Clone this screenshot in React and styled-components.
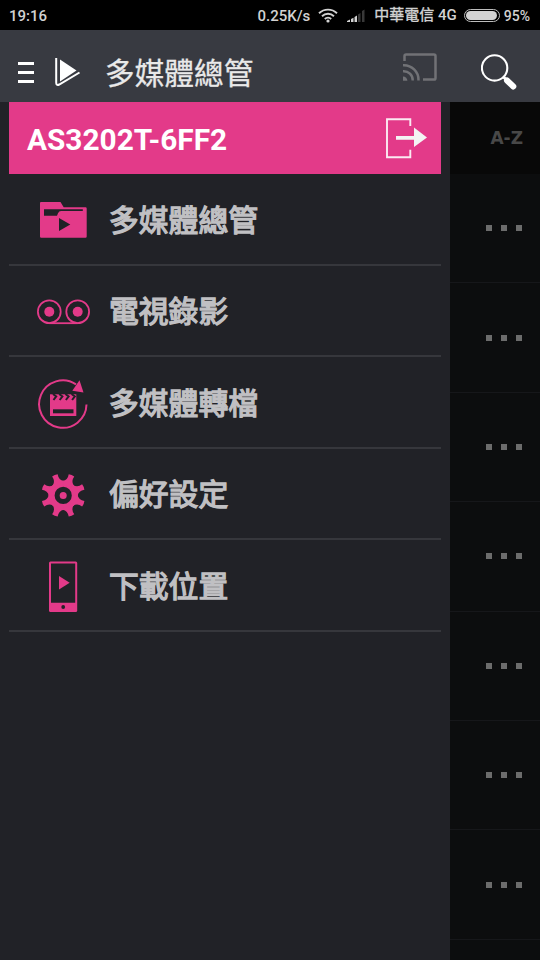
import React from 'react'
import styled, { createGlobalStyle } from 'styled-components'

const PINK = '#e33a89'
const DARK = '#212227'

const GlobalStyle = createGlobalStyle`
  * { box-sizing: border-box; }
  body {
    margin: 0;
    background: #0c0d0e;
    font-family: Roboto, 'Noto Sans CJK TC', sans-serif;
  }
  svg { display: block; flex: none; }
`

const Screen = styled.div`
  width: 540px;
  height: 960px;
  display: flex;
  flex-direction: column;
  overflow: hidden;
`

const StatusBar = styled.div`
  height: 30px;
  flex: none;
  display: flex;
  align-items: center;
  padding: 1px 10px 0 9px;
  background: #000;
  color: #d2d2d2;
  font-size: 15px;
  font-weight: 500;
  white-space: nowrap;
`

const Clock = styled.span`
  margin-right: auto;
  font-size: 15px;
`

const Speed = styled.span`
  margin-right: 8px;
  font-size: 15px;
`

const Carrier = styled.span`
  margin: -2px 7px 0 9px;
  line-height: 20px;

  b {
    font-weight: 400;
    -webkit-text-stroke: 0.4px #d2d2d2;
  }
`

const Battery = styled.span`
  width: 36px;
  height: 13px;
  margin-right: 4px;
  padding: 1px;
  border: 1px solid #bdbdbd;
  border-radius: 7px;

  &::after {
    content: '';
    display: block;
    width: 31px;
    height: 9px;
    border-radius: 5px;
    background: #d2d2d2;
  }
`

const Percent = styled.span`
  font-size: 14px;
`

const AppBar = styled.header`
  height: 72px;
  flex: none;
  display: flex;
  align-items: center;
  padding: 0 22px 0 18px;
  background: #383a41;
`

const MenuButton = styled.div`
  width: 16px;
  height: 21px;
  margin: 13px 21px 0 0;
  display: flex;
  flex-direction: column;
  justify-content: space-between;

  i {
    height: 3px;
    background: #fff;
  }
`

const Title = styled.h1`
  margin: 16px auto 0 24px;
  color: #e9e9e9;
  font-size: 29.7px;
  font-weight: 400;
  line-height: 40px;
  -webkit-text-stroke: 0.3px #e9e9e9;
`

const Body = styled.main`
  flex: 1;
  min-height: 0;
  display: flex;
`

const Drawer = styled.nav`
  width: 450px;
  padding: 0 9px;
  background: ${DARK};
`

const Device = styled.div`
  height: 72px;
  display: flex;
  align-items: center;
  justify-content: space-between;
  padding: 2px 14px 0 18px;
  background: ${PINK};
  color: #fff;
  font-size: 29.8px;
  font-weight: 700;
`

const Item = styled.div`
  height: 91.5px;
  display: flex;
  align-items: center;
  gap: 19px;
  padding-left: 27px;
  border-bottom: 2px solid #36373c;
`

const Label = styled.span`
  margin-top: 4px;
  color: #c0c0c3;
  font-size: 29.8px;
  line-height: 40px;
  -webkit-text-stroke: 1.3px #c0c0c3;
`

const Media = styled.section`
  flex: 1;
`

const Sort = styled.div`
  height: 72px;
  padding-right: 17px;
  background: #080808;
  color: #484848;
  font: 700 17px/72px 'DejaVu Sans', sans-serif;
  text-align: right;
`

const MediaRow = styled.div`
  height: 109.4px;
  display: flex;
  justify-content: flex-end;
  align-items: center;
  gap: 9px;
  padding-right: 18px;
  border-bottom: 1.5px solid #16171a;

  i {
    width: 6px;
    height: 6px;
    background: #6c6c6c;
  }
`

const WifiIcon = styled.svg`
  margin-top: -2px;
`

const SignalIcon = styled.svg`
  margin-left: 9px;
`

const LogoIcon = styled.svg`
  margin-top: 12px;
`

const CastIcon = styled.svg`
  margin: 2px 44px 0 0;
`

const SearchIcon = styled.svg`
  margin-top: 13px;
`

const ExitIcon = styled.svg`
  margin-top: -3px;
`

const Wifi = () => (
  <WifiIcon width='20' height='16' viewBox='0 0 20 16' fill='none' stroke='#d2d2d2' strokeWidth='1.9'>
    <path d='M1 6.2a13 13 0 0 1 18 0M4 9.2a8.7 8.7 0 0 1 12 0M6.8 12a4.6 4.6 0 0 1 6.4 0' />
    <circle cx='10' cy='14' r='1.6' fill='#d2d2d2' stroke='none' />
  </WifiIcon>
)

const Signal = () => (
  <SignalIcon width='18' height='13' viewBox='0 0 18 13'>
    <path d='M0 13v-1l3-1.5V13zM4 13v-3l2.5-1.2V13zM7.500 13V8l2.500-1.500V13z' fill='#d2d2d2' />
    <path d='M11 13V5.500L13.500 4v9zM15 13V2l2.500-1.500V13z' fill='#383838' />
  </SignalIcon>
)

const Logo = () => (
  <LogoIcon width='26' height='30' viewBox='0 0 26 30'>
    <path d='M5 2.5 21.5 13.5 5 24.5z' fill='#fff' />
    <path d='M1.2 1v24.500q0 3.500 3 2L24.500 15.500' fill='none' stroke='#fff' strokeWidth='2' />
  </LogoIcon>
)

const Cast = () => (
  <CastIcon width='34' height='28' viewBox='0 0 34 28' fill='none' stroke='#717276' strokeWidth='2.5'>
    <path d='M1.5 8V3q0-1.600 1.600-1.600h27.800q1.600 0 1.600 1.600v22q0 1.600-1.600 1.600H20' />
    <path d='M0 12.300a14.700 14.700 0 0 1 15.500 15.200M0 18.200a9 9 0 0 1 9.700 9.300' />
    <path d='M0 23.500a4.300 4.300 0 0 1 4.400 4.300H0z' fill='#717276' stroke='none' />
  </CastIcon>
)

const Search = () => (
  <SearchIcon width='37' height='38' viewBox='0 0 37 38' fill='none' stroke='#fff'>
    <circle cx='13.6' cy='13.9' r='12.7' strokeWidth='2.1' />
    <path d='m22 22.500 3.500 3.500' strokeWidth='3' />
    <path d='m26 26.500 6.300 6' strokeWidth='6' strokeLinecap='round' />
  </SearchIcon>
)

const Exit = () => (
  <ExitIcon width='42' height='42' viewBox='0 0 42 42'>
    <path d='M25.3 9V2.3H2v38h23.3v-7.5' fill='none' stroke='#fbeaf2' strokeWidth='1.9' />
    <path d='M11 19h18v-8.500l13 10-13 9.500v-7.300H11z' fill='#f3f3f3' />
  </ExitIcon>
)

const Icon = ({ children }) => (
  <svg width='54' height='54' viewBox='0 0 54 54' fill={PINK}>{children}</svg>
)

const FolderIcon = () => (
  <Icon>
    <path d='M5 10h19.5l3.2 5.2h21.8q1.2 0 1.2 1.2v28.1q0 1.2-1.2 1.2H5.2Q4 45.7 4 44.5V11q0-1 1-1z' />
    <path d='M8 17.3h38.8V19H25q-2 0-3 2.3l-1 2.4H8zM23 26v13l11.3-6.5z' fill={DARK} />
  </Icon>
)

const TapeIcon = () => (
  <Icon>
    <g fill='none' stroke={PINK} strokeWidth='1.8'>
      <circle cx='13.3' cy='28.7' r='11.4' />
      <circle cx='41.7' cy='28.7' r='11.4' />
      <path d='M13.3 40.2h28.4' />
    </g>
    <circle cx='13.3' cy='28.7' r='5' />
    <circle cx='41.7' cy='28.7' r='5' />
  </Icon>
)

const ConvertIcon = () => (
  <Icon>
    <path d='M50.5 29.6A23.7 23.7 0 1 1 40 9.4' fill='none' stroke={PINK} strokeWidth='2' />
    <path d='m43.5 5.3 4 12.2-11.2-1.7z' />
    <path d='M14 19.3h26.3V41H14z' />
    <path d='M17 34.3h20.5v4H17z' fill={DARK} />
    <path d='m17 19 3.2 2.4-2.7 3.6M23.2 19l3.2 2.4-2.7 3.6M29.4 19l3.2 2.4-2.7 3.6M35.6 19l3.2 2.4-2.7 3.6' fill='none' stroke={DARK} strokeWidth='2' />
  </Icon>
)

const GearIcon = () => (
  <Icon>
    <g transform='translate(27.2 29.4)'>
      <circle r='11.6' fill='none' stroke={PINK} strokeWidth='6' />
      {[0, 1, 2, 3, 4, 5, 6, 7].map(i => (
        <path key={i} d='M-3-21.7Q0-22.6 3-21.7Q1.6-16 6-13L4-10h-8l-2-3Q-1.6-16-3-21.7z' transform={`rotate(${i * 45 + 22.5})`} />
      ))}
      <circle r='3.5' />
    </g>
  </Icon>
)

const PhoneIcon = () => (
  <Icon>
    <rect x='13' y='3.6' width='28.2' height='50.4' rx='1.5' />
    <path d='M15 5.6h24.2V44.8H15z' fill={DARK} />
    <path d='M23 18v13.4l10.7-6.7z' />
    <circle cx='27.2' cy='49' r='1.9' fill={DARK} />
  </Icon>
)

const items = [
  ['多媒體總管', FolderIcon],
  ['電視錄影', TapeIcon],
  ['多媒體轉檔', ConvertIcon],
  ['偏好設定', GearIcon],
  ['下載位置', PhoneIcon]
]

export default function App () {
  return (
    <Screen>
      <GlobalStyle />
      <StatusBar>
        <Clock>19:16</Clock>
        <Speed>0.25K/s</Speed>
        <Wifi />
        <Signal />
        <Carrier><b>中華電信</b> 4G</Carrier>
        <Battery />
        <Percent>95%</Percent>
      </StatusBar>
      <AppBar>
        <MenuButton><i /><i /><i /></MenuButton>
        <Logo />
        <Title lang='zh-Hant'>多媒體總管</Title>
        <Cast />
        <Search />
      </AppBar>
      <Body>
        <Drawer>
          <Device>
            AS3202T-6FF2
            <Exit />
          </Device>
          {items.map(([text, ItemIcon]) => (
            <Item key={text}>
              <ItemIcon />
              <Label lang='zh-Hant'>{text}</Label>
            </Item>
          ))}
        </Drawer>
        <Media>
          <Sort>A-Z</Sort>
          {Array.from({ length: 8 }, (_, i) => (
            <MediaRow key={i}><i /><i /><i /></MediaRow>
          ))}
        </Media>
      </Body>
    </Screen>
  )
}
